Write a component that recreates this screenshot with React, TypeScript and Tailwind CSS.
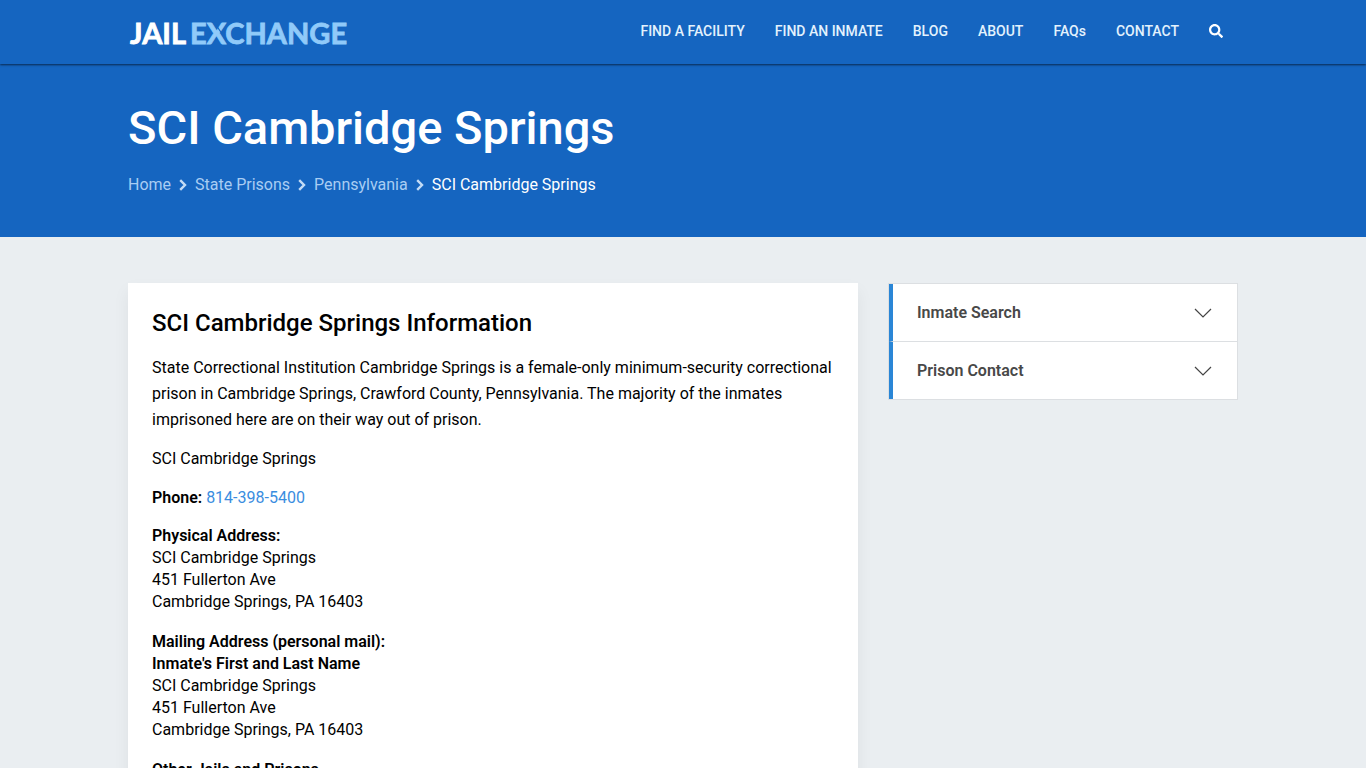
import { FaSearch } from "react-icons/fa";

const navItems = ["FIND A FACILITY", "FIND AN INMATE", "BLOG", "ABOUT", "FAQs", "CONTACT"];
const crumbs = ["Home", "State Prisons", "Pennsylvania"];
const panels = ["Inmate Search", "Prison Contact"];

function Logo() {
  return (
    <a href="#" aria-label="Jail Exchange" className="block">
      <svg width="226" height="40" viewBox="0 0 226 40" className="block overflow-visible font-[Lato,sans-serif] font-bold">
        <text x="2" y="32" fontSize="29" fill="#ffffff" stroke="#ffffff" strokeWidth="0.8">JAIL</text>
        <text x="62" y="32" fontSize="29" fill="#90caf9" stroke="#90caf9" strokeWidth="0.8">EXCHANGE</text>
        <path d="M88 13 99 29" stroke="#1565c0" strokeWidth="1.3" fill="none" />
      </svg>
    </a>
  );
}

function CrumbArrow() {
  return (
    <svg width="8" height="12" viewBox="0 0 8 12" fill="none" aria-hidden="true">
      <path d="M1.2 1.2 6 6 1.2 10.8" stroke="#c3dcf6" strokeWidth="2.4" />
    </svg>
  );
}

function Header() {
  return (
    <header className="relative h-16 bg-[#1565c0] shadow-[0_1px_2px_rgba(0,0,0,0.6)]">
      <div className="mx-auto flex h-full max-w-[1110px] items-center justify-between">
        <Logo />
        <nav className="flex items-center gap-[30px] pr-[15px] pb-0.5 text-sm font-medium text-[#e3f2fd]">
          {navItems.map((item) => (
            <a key={item} href="#" className="leading-5">
              {item}
            </a>
          ))}
          <button type="button" aria-label="Search" className="text-white">
            <FaSearch size={14} />
          </button>
        </nav>
      </div>
    </header>
  );
}

function Hero() {
  return (
    <section className="bg-[#1565c0] pt-9 pb-10 text-white">
      <div className="mx-auto max-w-[1110px]">
        <h1 className="text-[47px] leading-[56px] font-medium">SCI Cambridge Springs</h1>
        <nav aria-label="Breadcrumb" className="mt-[17px] flex h-6 items-center gap-2 text-base leading-6">
          {crumbs.map((c) => (
            <span key={c} className="flex items-center gap-2">
              <a href="#" className="text-[#a9cdf3]">
                {c}
              </a>
              <CrumbArrow />
            </span>
          ))}
          <span>SCI Cambridge Springs</span>
        </nav>
      </div>
    </section>
  );
}

function Article() {
  return (
    <article className="min-w-0 flex-1 bg-white p-6 shadow-[0_8px_16px_rgba(0,0,0,0.06)]">
      <h2 className="text-2xl leading-8 font-medium">SCI Cambridge Springs Information</h2>
      <div className="mt-4 flex flex-col gap-[13px] leading-[26px]">
        <p>
          State Correctional Institution Cambridge Springs is a female-only minimum-security correctional prison in
          Cambridge Springs, Crawford County, Pennsylvania. The majority of the inmates imprisoned here are on their
          way out of prison.
        </p>
        <p>SCI Cambridge Springs</p>
        <p>
          <strong className="font-semibold">Phone:</strong>{" "}
          <a href="tel:8143985400" className="text-[#3a8de0]">
            814-398-5400
          </a>
        </p>
      </div>
      <div className="mt-3.5 flex flex-col gap-[18px] leading-[22px]">
        <p>
          <strong className="font-semibold">Physical Address:</strong>
          <br />
          SCI Cambridge Springs
          <br />
          451 Fullerton Ave
          <br />
          Cambridge Springs, PA 16403
        </p>
        <p>
          <strong className="font-semibold">
            Mailing Address (personal mail):
            <br />
            Inmate's First and Last Name
          </strong>
          <br />
          SCI Cambridge Springs
          <br />
          451 Fullerton Ave
          <br />
          Cambridge Springs, PA 16403
        </p>
        <p>
          <strong className="font-semibold">Other Jails and Prisons</strong>
        </p>
      </div>
    </article>
  );
}

function Sidebar() {
  return (
    <aside className="w-[350px] shrink-0 self-start border border-[#dcdfe2] bg-white">
      {panels.map((p) => (
        <button
          key={p}
          type="button"
          aria-expanded="false"
          className="flex h-[58px] w-full items-center justify-between border-t border-l-4 border-t-[#dcdfe2] border-l-[#2a86d6] pr-[25px] pl-6 text-left font-semibold text-[#484848] first:h-[57px] first:border-t-0"
        >
          {p}
          <svg width="18" height="10" viewBox="0 0 18 10" fill="none" aria-hidden="true">
            <path d="M1 1 9 9 17 1" stroke="#444444" strokeWidth="1.2" />
          </svg>
        </button>
      ))}
    </aside>
  );
}

export default function App() {
  return (
    <div className="min-h-screen bg-[#eaeef1] font-[Roboto,sans-serif] text-base text-black">
      <Header />
      <Hero />
      <main className="mx-auto flex max-w-[1110px] items-start gap-[30px] pt-[46px]">
        <Article />
        <Sidebar />
      </main>
    </div>
  );
}
